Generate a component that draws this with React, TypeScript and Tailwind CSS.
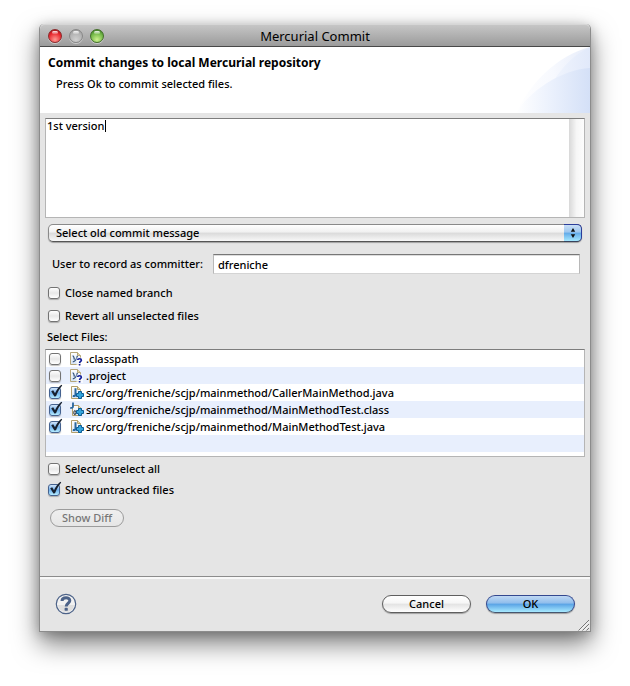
import { useState } from "react";
import type { ReactNode } from "react";

type Kind = "unknown" | "java" | "class";
type FileRow = { path: string; kind: Kind; checked: boolean };

const initialFiles: FileRow[] = [
  { path: ".classpath", kind: "unknown", checked: false },
  { path: ".project", kind: "unknown", checked: false },
  { path: "src/org/freniche/scjp/mainmethod/CallerMainMethod.java", kind: "java", checked: true },
  { path: "src/org/freniche/scjp/mainmethod/MainMethodTest.class", kind: "class", checked: true },
  { path: "src/org/freniche/scjp/mainmethod/MainMethodTest.java", kind: "java", checked: true },
];

function Check({
  checked,
  onChange,
  id,
  label,
}: {
  checked: boolean;
  onChange: (value: boolean) => void;
  id: string;
  label?: string;
}) {
  return (
    <span className="relative block h-3 w-3 shrink-0">
      <input
        id={id}
        type="checkbox"
        aria-label={label}
        checked={checked}
        onChange={(e) => onChange(e.target.checked)}
        className="block h-3 w-3 appearance-none rounded-[3px] border border-[#737373] bg-linear-to-b from-white via-[#e8e8e8] to-white shadow-[0_1px_1px_rgba(0,0,0,0.25)] checked:border-[#45628f] checked:from-[#d3e6fa] checked:via-[#70b0ec] checked:to-[#b5ecff]"
      />
      {checked && (
        <svg viewBox="0 0 15 15" className="pointer-events-none absolute -top-[3px] left-0 h-[15px] w-[15px]" aria-hidden="true">
          <path d="M2.2 7.2 4.2 6.2 6 9.2C7.6 5.8 9.6 3 12.4 .8L13.2 1.5C10.6 4.6 8.6 8.2 7 12.2L5.4 12.4Z" fill="#17202e" />
        </svg>
      )}
    </span>
  );
}

function CheckRow({ id, text, initial }: { id: string; text: ReactNode; initial: boolean }) {
  const [on, setOn] = useState(initial);
  return (
    <div className="flex h-4 items-center gap-1 pl-[3px]">
      <Check id={id} checked={on} onChange={setOn} />
      <label htmlFor={id} className="pl-px">
        {text}
      </label>
    </div>
  );
}

function PlusBadge() {
  return (
    <path
      d="M8.5 6.5h3v2h2v3h-2v2h-3v-2h-2v-3h2z"
      fill="#35a5dc"
      stroke="#0c5c95"
      strokeWidth="1"
    />
  );
}

function FileIcon({ kind }: { kind: Kind }) {
  return (
    <svg viewBox="0 0 14 15" className="block h-[15px] w-[14px]" aria-hidden="true">
      <defs>
        <linearGradient id={`page-${kind}`} x1="0" y1="0" x2="0" y2="1">
          <stop offset="0" stopColor="#ffffff" />
          <stop offset="1" stopColor="#d5e4f5" />
        </linearGradient>
      </defs>
      {kind === "unknown" && (
        <>
          <path d="M.5 1.5h7l3 3v9H.5z" fill="url(#page-unknown)" stroke="#b5a67a" />
          <path d="M7.5 1.5v3h3" fill="#e7d9a8" stroke="#b5a67a" />
          <path d="M2.6 4.8C3.8 4.8 4 6 4.4 8.6M7.4 4.8C6.8 7.4 5.2 10.4 2.8 10.8" fill="none" stroke="#35557f" strokeWidth="1.3" />
          <path d="M6.5 6.5H13V15H6.5z" fill="#fff" opacity=".7" />
          <path d="M7.6 9C7.8 7.4 11.4 7.4 11.4 9.2 11.4 10.4 9.6 10.4 9.6 12M9.6 12.9v1.5" fill="none" stroke="#101d9b" strokeWidth="1.6" />
        </>
      )}
      {kind === "java" && (
        <>
          <path d="M1.5 1.5h6l3 3v9h-9z" fill="url(#page-java)" stroke="#b3a06c" />
          <path d="M7.5 1.5v3h3" fill="#e7d9a8" stroke="#b3a06c" />
          <path d="M5.5 3.2v6C5.5 10.8 4.6 11.2 2.8 10.9" fill="none" stroke="#28679f" strokeWidth="2" />
          <PlusBadge />
        </>
      )}
      {kind === "class" && (
        <>
          <path d="M2.5 3.5h6l3 3v7h-9z" fill="url(#page-class)" stroke="#b3a06c" />
          <path d="M8.5 3.5v3h3" fill="#e7d9a8" stroke="#b3a06c" />
          <path d="M3 .5v4C3 5.8 2 6.2 .2 5.8" fill="none" stroke="#28679f" strokeWidth="1.8" />
          <ellipse cx="4.9" cy="10.6" rx="1.1" ry="2" fill="none" stroke="#222" />
          <PlusBadge />
        </>
      )}
    </svg>
  );
}

function TrafficLight({ label, tone }: { label: string; tone: string }) {
  return (
    <button
      type="button"
      aria-label={label}
      className={`relative block h-[14px] w-[14px] rounded-full border shadow-[0_1px_0_rgba(255,255,255,0.45)] ${tone}`}
    >
      <span className="absolute top-px left-[3px] h-[3px] w-[6px] rounded-full bg-linear-to-b from-white/90 to-white/20" />
    </button>
  );
}

function HeaderArt() {
  return (
    <svg viewBox="0 0 74 66" className="block h-[66px] w-[74px] self-end" aria-hidden="true">
      <defs>
        <linearGradient id="arc-a" x1="0" x2="1">
          <stop offset="0" stopColor="#ffffff" />
          <stop offset="0.5" stopColor="#f7f9fe" />
          <stop offset="1" stopColor="#e6ecfa" />
        </linearGradient>
        <linearGradient id="arc-b" x1="0" x2="1">
          <stop offset="0" stopColor="#f5f8fe" />
          <stop offset="1" stopColor="#e1e9fa" />
        </linearGradient>
        <linearGradient id="arc-c" x1="0" x2="1">
          <stop offset="0" stopColor="#ffffff" />
          <stop offset="0.4" stopColor="#eef3fd" />
          <stop offset="1" stopColor="#d4e0f7" />
        </linearGradient>
      </defs>
      <path d="M0 66C14 36 42 8 74 0V66Z" fill="url(#arc-a)" />
      <path d="M26 66C30 40 48 12 74 0V66Z" fill="url(#arc-b)" />
      <path d="M0 66C14 44 44 23 74 21V66Z" fill="url(#arc-c)" />
    </svg>
  );
}

export default function App() {
  const [files, setFiles] = useState(initialFiles);
  const [message, setMessage] = useState("1st version");
  const [editing, setEditing] = useState(false);
  const [user, setUser] = useState("dfreniche");

  const toggle = (path: string, checked: boolean) =>
    setFiles(files.map((f) => (f.path === path ? { ...f, checked } : f)));

  return (
    <div className="flex min-h-screen flex-col bg-white px-[39px] pt-6 pb-[54px] font-['Noto_Sans','Open_Sans',sans-serif] text-[11px] leading-4 font-medium text-black">
      <main className="flex flex-1 flex-col rounded-t-[5px] border border-t-0 border-[#8c8c8c] bg-[#e5e5e5] shadow-[0_12px_26px_rgba(0,0,0,0.5),0_2px_12px_rgba(0,0,0,0.22)]">
        <div className="grid h-[23px] grid-cols-[1fr_auto_1fr] items-center rounded-t-[5px] border-t border-b border-t-[#d6d6d6] border-b-[#484848] bg-linear-to-b from-[#c6c6c6] to-[#9b9b9b]">
          <div className="flex gap-[7px] pl-2">
            <TrafficLight label="Close" tone="border-[#8b2a2c] bg-[radial-gradient(circle_at_50%_80%,#ff9a93,#e8262d_60%,#8e1015)]" />
            <TrafficLight label="Minimize" tone="border-[#888888] bg-[radial-gradient(circle_at_50%_80%,#d0d0d0,#b2b2b2_60%,#919191)]" />
            <TrafficLight label="Zoom" tone="border-[#437029] bg-[radial-gradient(circle_at_50%_80%,#cdf28e,#6fb545_60%,#2f6a1d)]" />
          </div>
          <h1 className="text-[13px] leading-5 font-normal">Mercurial Commit</h1>
        </div>

        <header className="flex h-[66px] justify-between bg-white">
          <div className="pt-2 pl-2">
            <h2 className="text-xs font-bold">Commit changes to local Mercurial repository</h2>
            <p className="pt-[5px] pl-2">Press Ok to commit selected files.</p>
          </div>
          <HeaderArt />
        </header>

        <form className="flex flex-1 flex-col" onSubmit={(e) => e.preventDefault()}>
          <div className="flex flex-1 flex-col px-[5px] pt-[5px]">
            <div className="relative flex h-[100px] border border-[#b5b5b5] border-t-[#7d7d7d] bg-white">
              <textarea
                aria-label="Commit message"
                value={message}
                onFocus={() => setEditing(true)}
                onChange={(e) => setMessage(e.target.value)}
                className="block min-w-0 flex-1 resize-none bg-transparent pl-px leading-[14px] outline-none"
              />
              {!editing && <span className="pointer-events-none absolute top-px left-[59px] h-3 w-px bg-black" />}
              <div className="w-[15px] bg-linear-to-r from-[#d8d8d8] via-[#f6f6f6] to-[#fdfdfd]" />
            </div>

            <div className="relative mx-[3px] mt-[6px]">
              <select
                aria-label="Old commit message"
                className="block h-[18px] w-full appearance-none rounded-[5px] border border-[#8a8a8a] border-b-[#555555] bg-[linear-gradient(#ffffff,#f0f0f0_45%,#dadada_50%,#f8f8f8)] pl-[7px] leading-4 shadow-[0_1px_1px_rgba(0,0,0,0.3)] outline-none"
              >
                <option>Select old commit message</option>
              </select>
              <span className="pointer-events-none absolute top-0 right-0 flex h-[18px] w-[18px] items-center justify-center rounded-r-[5px] border border-l-0 border-[#2b3d9a] border-b-[#38425c] bg-[linear-gradient(#c9dff6,#9cc6ef_45%,#62aae8_50%,#a5e8ff)]">
                <svg viewBox="0 0 6 12" className="h-3 w-[6px]" aria-hidden="true">
                  <path d="M3 1 5.2 4.8H.8ZM.8 7.2H5.2L3 11Z" fill="#101010" />
                </svg>
              </span>
            </div>

            <div className="mt-3 flex items-center gap-2 pr-[5px] pl-[7px]">
              <label htmlFor="committer" className="w-[153px] shrink-0 whitespace-nowrap">
                User to record as committer:
              </label>
              <input
                id="committer"
                type="text"
                value={user}
                onChange={(e) => setUser(e.target.value)}
                className="h-5 min-w-0 flex-1 border border-[#b8b8b8] border-t-[#777777] border-b-[#d4d4d4] bg-white px-1 shadow-[inset_0_1px_0_#dddddd] outline-none"
              />
            </div>

            <div className="flex flex-col gap-[7px] pt-[11px]">
              <CheckRow id="close-branch" text="Close named branch" initial={false} />
              <CheckRow id="revert" text="Revert all unselected files" initial={false} />
            </div>

            <h3 className="pt-[5px] pl-0.5">Select Files:</h3>
            <div className="mt-1 h-[108px] border border-[#b5b5b5] border-t-[#7d7d7d] bg-white">
              <table className="w-full border-collapse">
                <tbody>
                  {files.map((f) => (
                    <tr key={f.path} className="h-[17px] even:bg-[#e8effd]">
                      <td className="w-[22px] p-0 pl-[3px]">
                        <Check
                          id={`file-${f.path}`}
                          label={f.path}
                          checked={f.checked}
                          onChange={(v) => toggle(f.path, v)}
                        />
                      </td>
                      <td className="w-[18px] p-0 pl-0.5">
                        <FileIcon kind={f.kind} />
                      </td>
                      <td className="p-0 leading-4">{f.path}</td>
                    </tr>
                  ))}
                  <tr className="h-[17px] bg-[#e8effd]">
                    <td colSpan={3} className="p-0" />
                  </tr>
                </tbody>
              </table>
            </div>

            <div className="flex flex-col gap-[5px] pt-1">
              <CheckRow id="select-all" text="Select/unselect all" initial={false} />
              <CheckRow id="untracked" text="Show untracked files" initial={true} />
            </div>

            <div className="pt-[11px] pb-12 pl-[5px]">
              <button
                type="button"
                disabled
                className="block h-[18px] w-[74px] rounded-full border border-[#9c9c9c] bg-linear-to-b from-[#efefef] to-[#e6e6e6] leading-4 text-[#777777]"
              >
                Show Diff
              </button>
            </div>
          </div>

          <footer className="relative flex h-[55px] items-center justify-between border-t border-[#8c8c8c] pr-[15px] pl-[15px] shadow-[inset_0_2px_0_#f8f8f8]">
            <button type="button" aria-label="Help" className="block h-[22px] w-[22px]">
              <svg viewBox="0 0 22 22" className="block h-[22px] w-[22px]" aria-hidden="true">
                <circle cx="11" cy="11" r="9.7" fill="#f1f1f1" stroke="#4c6288" strokeWidth="1.2" />
                <path d="M3 12h16A8 7 0 0 1 3 12Z" fill="#dedede" />
                <path d="M7 8C7.2 3.8 15 3.8 14.8 7.8 14.7 10.4 11.2 10.2 11.2 13.6" fill="none" stroke="#4c6288" strokeWidth="3" />
                <rect x="9.6" y="14.8" width="3.2" height="3" rx=".9" fill="#4c6288" />
              </svg>
            </button>
            <div className="flex gap-[15px]">
              <button
                type="button"
                className="block h-[18px] w-[89px] rounded-full border border-[#5f5f5f] bg-[linear-gradient(#ffffff,#f6f6f6_45%,#e3e3e3_50%,#ffffff)] leading-4 shadow-[0_1px_1px_rgba(0,0,0,0.3)]"
              >
                Cancel
              </button>
              <button
                type="submit"
                className="block h-[18px] w-[89px] rounded-full border border-[#34488f] border-b-[#46566f] bg-[linear-gradient(#bfd8f3,#8fbdec_45%,#58a2e5_50%,#a8eaff)] leading-4 shadow-[0_1px_1px_rgba(0,0,0,0.3)]"
              >
                OK
              </button>
            </div>
            <svg viewBox="0 0 12 12" className="absolute right-0 bottom-0 h-3 w-3" aria-hidden="true">
              <path d="M.5 11.5 11 1M4.5 11.5 11 5M8.5 11.5 11 9" stroke="#777777" fill="none" />
              <path d="M2 11.5 11 2.5M6 11.5 11 6.5" stroke="#fafafa" fill="none" />
            </svg>
          </footer>
        </form>
      </main>
    </div>
  );
}
